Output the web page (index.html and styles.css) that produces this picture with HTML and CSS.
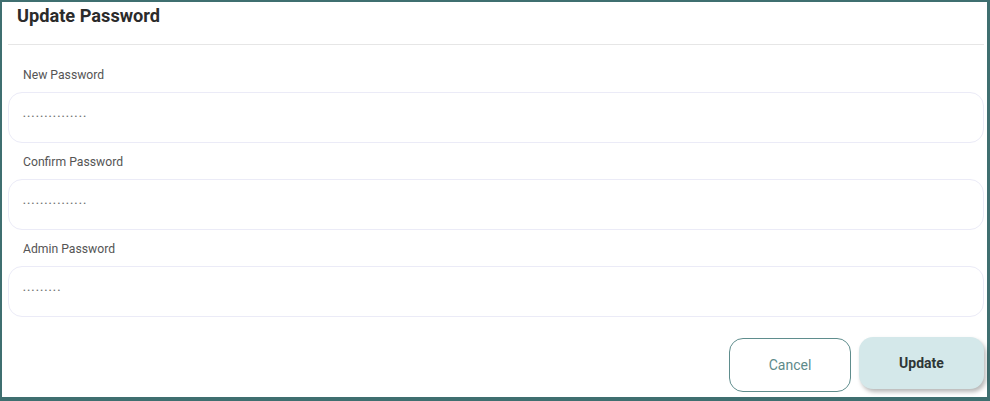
FILE: index.html
```html
<!DOCTYPE html>
<html>
<head>
<meta charset="utf-8">
<link rel="stylesheet" href="styles.css">
</head>
<body>
<div class="frame">
  <div class="header">
    <h1 class="title">Update Password</h1>
  </div>
  <div class="divider"></div>
  <form class="form">
    <div class="field">
      <label class="label">New Password</label>
      <div class="input"><span class="dots">•••••••••••••••</span></div>
    </div>
    <div class="field">
      <label class="label">Confirm Password</label>
      <div class="input"><span class="dots">•••••••••••••••</span></div>
    </div>
    <div class="field">
      <label class="label">Admin Password</label>
      <div class="input"><span class="dots">•••••••••</span></div>
    </div>
    <div class="actions">
      <button type="button" class="btn btn-cancel">Cancel</button>
      <button type="button" class="btn btn-update">Update</button>
    </div>
  </form>
</div>
</body>
</html>
```
FILE: styles.css
```css
html, body {
  margin: 0;
  padding: 0;
  background: #3f6f70;
}
.frame {
  box-sizing: border-box;
  width: 990px;
  height: 401px;
  border-style: solid;
  border-color: #3f6f70;
  border-width: 2px 3px 4px 2px;
  background: #ffffff;
  font-family: Roboto, "Liberation Sans", sans-serif;
  display: flex;
  flex-direction: column;
}
.header {
  height: 42px;
  padding-left: 15px;
  box-sizing: border-box;
}
.title {
  margin: 0;
  padding-top: 3px;
  font-size: 18.2px;
  line-height: 22px;
  font-weight: 700;
  color: #2b2b2b;
}
.divider {
  height: 1px;
  background: #e6e6e6;
  margin: 0 3px 0 6px;
}
.form {
  display: flex;
  flex-direction: column;
  padding: 11px 3px 0 6px;
}
.field {
  display: flex;
  flex-direction: column;
}
.label {
  font-size: 12.2px;
  line-height: 16px;
  color: #555555;
  padding: 11px 0 9px 15px;
}
.input {
  box-sizing: border-box;
  height: 51px;
  border: 1px solid #ebebf7;
  border-radius: 14px;
  display: flex;
  align-items: center;
  padding: 0 0 2px 14px;
}
.dots {
  font-size: 8px;
  letter-spacing: 1.6px;
  color: #707070;
  line-height: 10px;
}
.actions {
  display: flex;
  justify-content: flex-end;
  align-items: flex-start;
  gap: 8px;
  margin-top: 20px;
}
.btn {
  font-family: Roboto, "Liberation Sans", sans-serif;
  font-size: 14px;
  border-radius: 14px;
  cursor: pointer;
}
.btn-cancel {
  margin-top: 1px;
  width: 122px;
  height: 54px;
  background: #ffffff;
  border: 1px solid #5f8d8d;
  color: #5e8a8a;
}
.btn-update {
  width: 125px;
  height: 52px;
  background: #d4e8ea;
  border: none;
  color: #2e3636;
  font-weight: 700;
  box-shadow: 2px 3px 4px rgba(0, 0, 0, 0.28);
}
```
